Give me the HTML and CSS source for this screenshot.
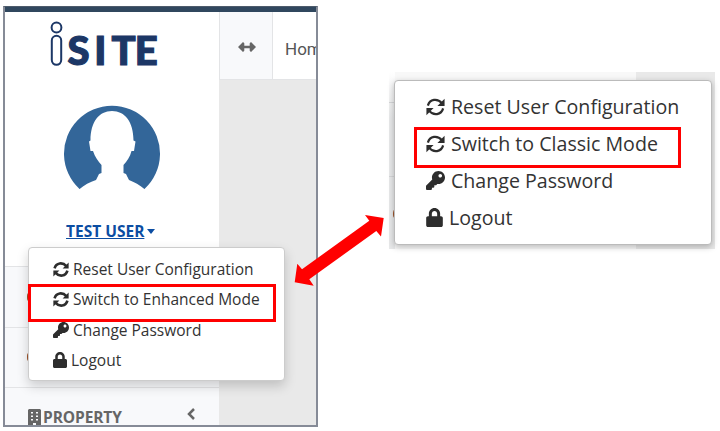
FILE: index.html
```html
<!DOCTYPE html>
<html>
<head>
<meta charset="utf-8">
	<title>iSite - User Menu</title>
	<link rel="stylesheet" href="styles.css">
</head>
<body>
	<!-- icons -->
	<svg class="defs">
		<symbol id="sync" viewBox="0 0 18 16"><path class="arc" d="M1.800 6.700C3.500 .2 11 -.4 15 4.300M16.200 9.300C14.500 15.800 7 16.400 3 11.700"/><path d="M17.600 .2V7H10.800zM.4 15.800V9H7.200z"/></symbol>
		<symbol id="key" viewBox="0 0 512 512"><path d="M512 176.001C512 273.203 433.202 352 336 352c-11.22 0-22.19-1.062-32.827-3.069l-24.012 27.014A23.999 23.999 0 0 1 261.223 384H224v40c0 13.255-10.745 24-24 24h-40v40c0 13.255-10.745 24-24 24H24c-13.255 0-24-10.745-24-24v-78.059c0-6.365 2.529-12.47 7.029-16.971l161.802-161.802C163.108 213.814 160 195.271 160 176 160 78.798 238.797.001 335.999 0 433.488-.001 512 78.511 512 176.001zM336 128c0 26.51 21.49 48 48 48s48-21.49 48-48-21.49-48-48-48-48 21.49-48 48z"/></symbol>
		<symbol id="lock" viewBox="0 0 448 512"><path d="M400 224h-24v-72C376 68.2 307.8 0 224 0S72 68.2 72 152v72H48c-26.5 0-48 21.5-48 48v192c0 26.5 21.5 48 48 48h352c26.5 0 48-21.5 48-48V272c0-26.5-21.5-48-48-48zm-104 0H152v-72c0-39.7 32.3-72 72-72s72 32.3 72 72v72z"/></symbol>
	</svg>

	<div class="appWindow">
		<div class="topStrip"></div>
		<div class="main">
			<div class="sidebar">
				<div class="profile">
					<svg class="logo" width="120" height="48" viewBox="0 0 120 48">
						<circle cx="9.500" cy="7.500" r="4.900"/>
						<rect x="4.800" y="15.800" width="9.400" height="29" rx="4.700"/>
						<text x="20.500 47.300 64.500 87.700" y="44.500">SITE</text>
					</svg>
					<svg class="avatar" width="96" height="96" viewBox="0 0 96 96">
						<path fill="#336699" d="M15.500 84A48 48 0 1 1 80.500 84C72 90 24 90 15.500 84z"/>
						<path fill="#fff" d="M48 6C35 6 26.500 17 26.500 35.500L25 36.500L26.500 46H29C31 52 34 56 37.500 60V68L35 69L32 75C26 77 20 80 15 84.500V97H81V84.500C76 80 70 77 65 75L62 69L59.500 68V60C63 56 66 52 67.500 46H70L71.500 36.500L69.500 35.500C69.500 17 61 6 48 6z"/>
					</svg>
					<div class="userName"><a>TEST USER</a><span class="caret"></span></div>
				</div>
				<div class="navItem"><span class="dot"></span></div>
				<div class="navItem"><span class="dot"></span></div>
				<div class="navItem property">
					<svg width="13" height="17" viewBox="0 0 13 17">
						<path fill="#666" fill-rule="evenodd" d="M1 0h11l1 1v16H8v-3H5v3H0V1zM3 3v1.500h2V3zM8 3v1.500h2V3zM3 6.500v1.500h2v-1.500zM8 6.500v1.500h2v-1.500zM3 10v1.500h2v-1.500zM8 10v1.500h2v-1.500z"/>
					</svg>
					<span class="label">PROPERTY</span>
					<svg class="chevron" width="10" height="12" viewBox="0 0 10 12"><path d="M8 1L3 6L8 11"/></svg>
				</div>
			</div>
			<div class="content">
				<div class="navbar">
					<div class="toggle">
						<svg width="18" height="10" viewBox="0 0 18 10"><path fill="#666" d="M0 5L5 0L6.300 1.300V3.700H11.700V1.300L13 0L18 5L13 10L11.700 8.700V6.300H6.300V8.700L5 10z"/></svg>
					</div>
					<div class="home">Home</div>
				</div>
			</div>
		</div>
		<div class="menu">
			<div class="item"><svg class="icon sync"><use href="#sync"/></svg>Reset User Configuration</div>
			<div class="item"><svg class="icon sync"><use href="#sync"/></svg>Switch to Enhanced Mode</div>
			<div class="item"><svg class="icon"><use href="#key"/></svg>Change Password</div>
			<div class="item"><svg class="icon lock"><use href="#lock"/></svg>Logout</div>
		</div>
		<div class="highlight"></div>
	</div>

	<div class="classicWindow">
		<div class="strip"><i></i><i></i><span class="dot"></span></div>
		<div class="menu big">
			<div class="item"><svg class="icon sync"><use href="#sync"/></svg>Reset User Configuration</div>
			<div class="item"><svg class="icon sync"><use href="#sync"/></svg>Switch to Classic Mode</div>
			<div class="item"><svg class="icon"><use href="#key"/></svg>Change Password</div>
			<div class="item"><svg class="icon lock"><use href="#lock"/></svg>Logout</div>
		</div>
		<div class="highlight"></div>
	</div>

	<svg class="arrow" width="92" height="74" viewBox="293 213 92 74">
		<polygon points="383.700,218 365,215 369.300,220.700 302,269.300 297.300,263.700 294.700,282.300 313.700,285.700 309.300,279.300 376.300,231 381,236.500"/>
	</svg>
</body>
</html>
```
FILE: styles.css
```css
*{
	box-sizing: border-box;
}
body{
	margin: 0px;
	height: 431px;
	overflow: hidden;
	position: relative;
	display: flex;
	align-items: flex-start;
	background-color: #fff;
	color: #333;
	font-family: "Open Sans", "Noto Sans", sans-serif;
}
.defs{
	position: absolute;
	width: 0px;
	height: 0px;
}
.appWindow{
	position: relative;
	display: flex;
	flex-direction: column;
	width: 315px;
	height: 421px;
	margin: 6px 0px 0px 3px;
	border: 2px solid #868b97;
	border-top: 1px solid #4d5b6b;
}
.topStrip{
	height: 5px;
	background-color: #30475e;
}
.main{
	flex: 1;
	min-height: 0px;
	display: flex;
	overflow: hidden;
}
.sidebar{
	width: 214px;
	background-color: #f8f9fb;
}
.profile{
	display: flex;
	flex-direction: column;
	height: 254px;
	padding-top: 8px;
	background-color: #fff;
}
.logo{
	margin-left: 42px;
}
.logo circle, .logo rect{
	fill: none;
	stroke: #1c3766;
	stroke-width: 2;
}
.logo text{
	fill: #1c3766;
	stroke: #1c3766;
	stroke-width: 1.2;
	font-family: Lato, sans-serif;
	font-weight: 900;
	font-size: 40px;
}
.avatar{
	margin: 37px 0px 0px 59px;
}
.userName{
	display: flex;
	align-items: center;
	margin: 20px 0px 0px 61px;
	font-size: 15.5px;
	line-height: 20px;
	font-weight: bold;
	color: #0b4da2;
}
.userName a{
	text-decoration: underline;
}
.caret{
	margin-left: 3px;
	border: 4.5px solid transparent;
	border-top: 5px solid #0b4da2;
	border-bottom: 0px;
}
.navItem{
	display: flex;
	align-items: center;
	height: 60.5px;
	padding-left: 22px;
	border-top: 1px solid #e3e4e6;
}
.dot{
	display: block;
	width: 8px;
	height: 10px;
	border-radius: 5px;
	background-color: #a0562c;
}
.property{
	padding: 0px 24px 1px 23px;
	font-size: 15.5px;
	line-height: 20px;
	font-weight: bold;
	color: #666;
}
.property .label{
	margin-left: 2px;
	letter-spacing: -0.1px;
}
.chevron{
	margin: -7px -1px 0px auto;
	fill: none;
	stroke: #666;
	stroke-width: 2.5;
}
.content{
	flex: 1;
	min-width: 0px;
	background-color: #e9e9e9;
}
.navbar{
	display: flex;
	height: 68px;
	background-color: #fff;
	border-bottom: 1px solid #e3e4e6;
}
.toggle{
	flex: none;
	display: flex;
	align-items: center;
	justify-content: center;
	width: 54px;
	padding: 2px 0px 0px 2px;
	background-color: #f8f9fb;
	border: 1px solid #e3e4e6;
	border-width: 0px 1px;
}
.home{
	padding: 25px 0px 0px 12px;
	font-family: Roboto, sans-serif;
	font-size: 17px;
	line-height: 24px;
	color: #555;
}
.menu{
	position: absolute;
	left: 23px;
	top: 240px;
	width: 257px;
	height: 134px;
	padding: 6px 0px 0px 24px;
	background-color: #fff;
	border: 1px solid #ccc;
	border-radius: 4px;
	box-shadow: 0px 5px 12px rgba(0,0,0,0.18);
}
.item{
	display: flex;
	align-items: center;
	height: 30.3px;
	font-size: 15.5px;
	white-space: nowrap;
}
.icon{
	width: 16px;
	height: 16px;
	margin-right: 4px;
	fill: #2d2d2d;
}
.icon.lock{
	width: 14px;
}
.icon.sync{
	height: 15px;
	stroke-width: 3;
}
.arc{
	fill: none;
	stroke: #2d2d2d;
}
.highlight{
	position: absolute;
	left: 23px;
	top: 277px;
	width: 248px;
	height: 38px;
	border: 3px solid #f00;
}
.classicWindow{
	position: relative;
	width: 326px;
	height: 177px;
	margin: 72px 0px 0px 71px;
	background: linear-gradient(to right, #f8f8f8 247px, #e9e9e9 247px);
}
.strip{
	width: 6px;
	height: 177px;
	padding-top: 30px;
	overflow: hidden;
	background: linear-gradient(#fff, #e8e9ea 45px);
}
.strip i{
	display: block;
	height: 74px;
	border-top: 1px solid #d5d6d8;
}
.strip .dot{
	margin: -41px 0px 0px 4px;
}
.menu.big{
	left: 5px;
	top: 8px;
	width: 318px;
	height: 165px;
	padding: 7.5px 0px 0px 31px;
	border-color: #bbb;
	box-shadow: 0px 2px 6px rgba(0,0,0,0.25);
}
.big .item{
	height: 36.8px;
	font-size: 19.6px;
}
.big .icon{
	width: 19px;
	height: 19px;
	margin-right: 6px;
}
.big .icon.lock{
	width: 17px;
}
.big .icon.sync{
	height: 18px;
	stroke-width: 2.1;
}
.classicWindow .highlight{
	left: 25px;
	top: 55px;
	width: 267px;
	height: 41px;
}
.arrow{
	position: absolute;
	left: 293px;
	top: 213px;
	fill: #f00;
}
```
